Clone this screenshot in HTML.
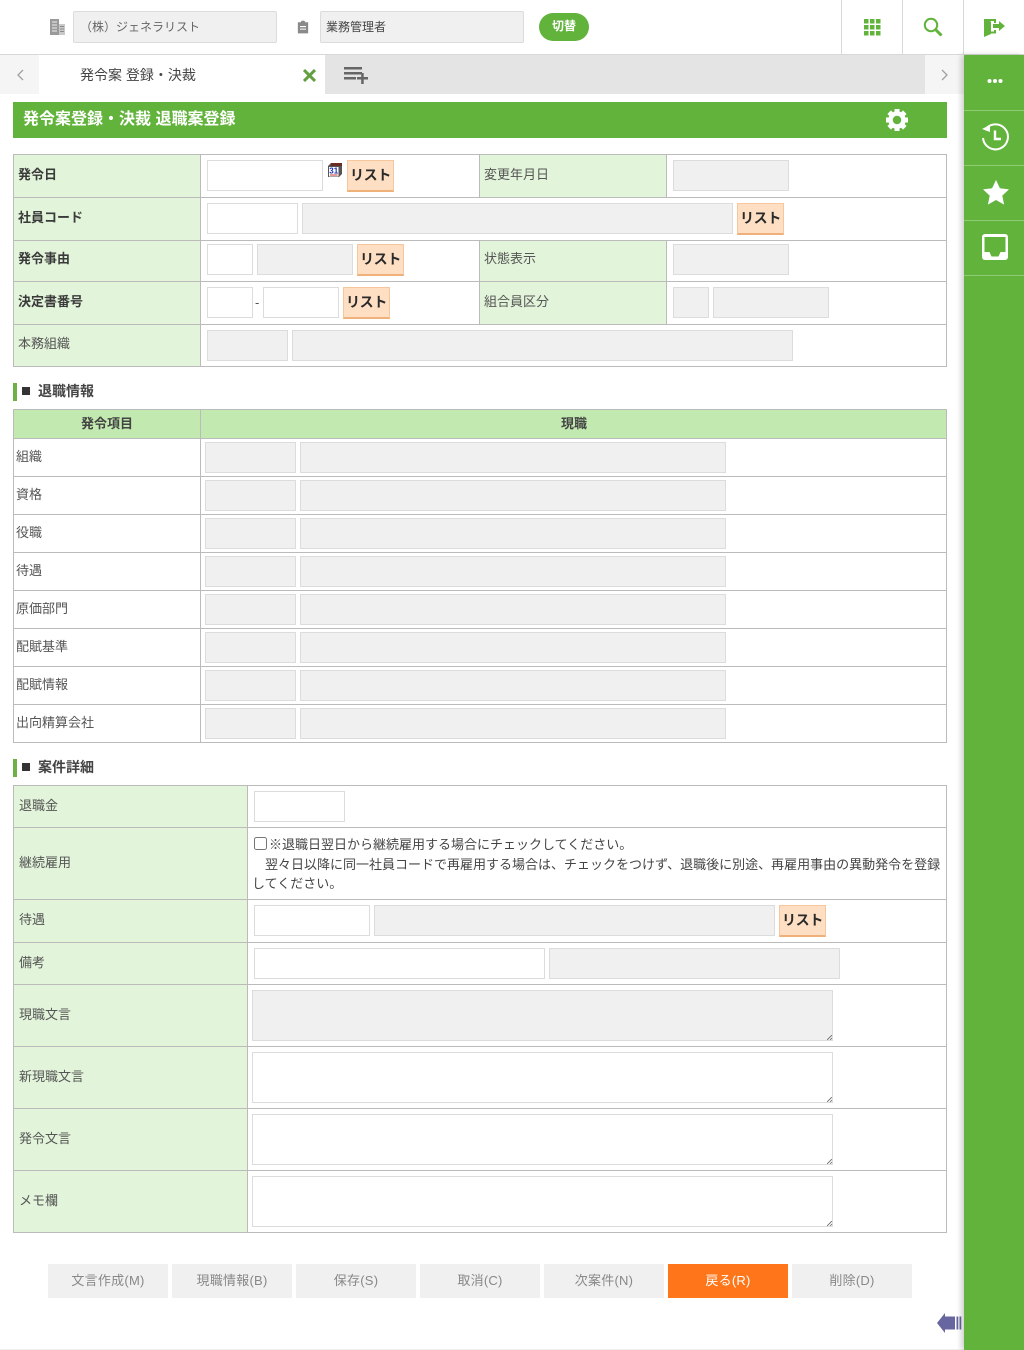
<!DOCTYPE html>
<html lang="ja">
<head>
<meta charset="utf-8">
<title>発令案 登録・決裁</title>
<style>
html,body{margin:0;padding:0;background:#fff}
body{position:relative;width:1024px;height:1350px;overflow:hidden;font-family:"Liberation Sans","Noto Sans CJK JP",sans-serif;font-size:13px;color:#555}
div,span,svg,textarea,input{position:absolute;box-sizing:border-box}
.t{line-height:20px;white-space:nowrap;height:20px;margin-top:1px}
.bd{font-weight:bold;color:#3a3a3a}
.g{background:#e2f4da}
.hl{height:1px;background:#bbb}
.vl{width:1px;background:#bbb}
.i{height:31px;background:#fff;border:1px solid #dcdcdc}
.d{height:31px;background:#f0f0f0;border:1px solid #dcdcdc}
.l{width:47px;height:32px;background:#fedfc3;border:1px solid #f6c79c;border-bottom:2px solid #f0b07a;font-size:14px;font-weight:bold;letter-spacing:-.3px;color:#2a2a2a;line-height:29px;text-align:center}
.sb{left:13px;width:4px;height:18px;background:#6db048}
.sq{left:22px;width:8px;height:8px;background:#333}
.sh{left:38px;font-size:14px;font-weight:bold;color:#444;margin-top:0}
.fb{top:1264px;width:120px;height:34px;background:#f0f0f0;color:#888;text-align:center;line-height:33px;letter-spacing:.25px}
textarea{left:252px;width:581px;height:51px;background:#fff;border:1px solid #dcdcdc;margin:0;padding:0;outline:0;resize:none}
.rh{left:827px}
.sep{left:964px;width:60px;height:1px;background:#8fcb73}
</style>
</head>
<body>
<!-- header -->
<div style="left:0;top:0;width:1024px;height:55px;background:#fff;border-bottom:1px solid #d8d8d8"></div>
<div style="left:0;top:55px;width:964px;height:5px;background:linear-gradient(#0000000d,#0000)"></div>
<svg style="left:50px;top:19px" width="16" height="16" viewBox="0 0 16 16"><rect x="0" y="0" width="9" height="16" fill="#9a9a9a"/><rect x="9" y="5" width="6" height="11" fill="#c9c9c9"/><path d="M2 3h5M2 6h5M2 9h5M2 12h5" stroke="#eee" stroke-width="1"/><path d="M10 7.500h4M10 10h4M10 12.500h4" stroke="#8a8a8a" stroke-width="1"/></svg>
<div style="left:73px;top:11px;width:204px;height:32px;background:#f0f0f0;border:1px solid #dcdcdc;border-radius:2px"></div>
<div class="t" style="left:80px;top:16px;color:#666;font-size:12px">（株）ジェネラリスト</div>
<svg style="left:297px;top:20px" width="12" height="14" viewBox="0 0 14 15"><path d="M1 2h3.500a2.500 2 0 0 1 5 0H13v13H1z" fill="#8a8a8a"/><path d="M3.500 7h7M3.500 10h7" stroke="#fff" stroke-width="1.200"/></svg>
<div style="left:320px;top:11px;width:204px;height:32px;background:#f0f0f0;border:1px solid #dcdcdc;border-radius:2px"></div>
<div class="t" style="left:326px;top:16px;color:#444;font-size:12px">業務管理者</div>
<div style="left:539px;top:13px;width:50px;height:28px;border-radius:14px;background:#62b33c;color:#fff;font-weight:bold;font-size:12px;text-align:center;line-height:27px">切替</div>
<div class="vl" style="left:841px;top:0;height:54px;background:#d8d8d8"></div>
<div class="vl" style="left:902px;top:0;height:54px;background:#d8d8d8"></div>
<div class="vl" style="left:963px;top:0;height:54px;background:#d8d8d8"></div>
<svg style="left:864px;top:19px" width="17" height="17" viewBox="0 0 17 17" fill="#62b33c"><rect x="0" y="0" width="4.500" height="4.500"/><rect x="6" y="0" width="4.500" height="4.500"/><rect x="12" y="0" width="4.500" height="4.500"/><rect x="0" y="6" width="4.500" height="4.500"/><rect x="6" y="6" width="4.500" height="4.500"/><rect x="12" y="6" width="4.500" height="4.500"/><rect x="0" y="12" width="4.500" height="4.500"/><rect x="6" y="12" width="4.500" height="4.500"/><rect x="12" y="12" width="4.500" height="4.500"/></svg>
<svg style="left:923px;top:17px" width="20" height="20" viewBox="0 0 20 20" fill="none" stroke="#62b33c"><circle cx="8" cy="8" r="6.200" stroke-width="2"/><path d="M12.500 12.500L18.500 18.500" stroke-width="3"/></svg>
<svg style="left:984px;top:19px" width="22" height="19" viewBox="0 0 22 19" fill="#62b33c"><path d="M0 0L7 2.500V15L0 18z"/><path d="M0 0H12V4H10V2H3z"/><path d="M7 12.500H10V11H12V14.500H7z"/><path d="M9 5H15V2L21 7 15 12V9H9z"/></svg>

<!-- tab bar -->
<div style="left:0;top:55px;width:964px;height:39px;background:#f5f5f5"></div>
<div style="left:39px;top:55px;width:286px;height:39px;background:#fff"></div>
<div style="left:325px;top:55px;width:600px;height:39px;background:#e4e4e4"></div>
<svg style="left:16px;top:69px" width="8" height="12" viewBox="0 0 8 12" fill="none" stroke="#a0a0a0" stroke-width="1.300"><path d="M7 1L2 6l5 5"/></svg>
<div class="t" style="left:80px;top:64px;color:#444;font-size:14px">発令案 登録・決裁</div>
<svg style="left:303px;top:69px" width="13" height="13" viewBox="0 0 13 13" stroke="#62a040" stroke-width="3"><path d="M1 1l11 11M12 1L1 12"/></svg>
<svg style="left:344px;top:67px" width="24" height="17" viewBox="0 0 24 17" fill="#666"><rect x="0" y="0" width="18" height="2.500"/><rect x="0" y="5" width="18" height="2.500"/><rect x="0" y="10" width="12" height="2.500"/><rect x="13" y="10" width="11" height="2.500"/><rect x="17.200" y="6" width="2.500" height="11"/></svg>
<svg style="left:941px;top:69px" width="8" height="12" viewBox="0 0 8 12" fill="none" stroke="#a0a0a0" stroke-width="1.300"><path d="M1 1l5 5-5 5"/></svg>

<!-- title -->
<div style="left:13px;top:102px;width:934px;height:36px;background:#62b33c"></div>
<div class="t" style="left:23px;top:109px;font-size:16px;font-weight:bold;color:#fff">発令案登録・決裁 退職案登録</div>
<svg style="left:885px;top:108px" width="24" height="24" viewBox="0 0 24 24"><circle cx="12" cy="12" r="6.500" fill="none" stroke="#fff" stroke-width="4.500"/><g stroke="#fff" stroke-width="5"><path d="M12 1v4M12 19v4M1 12h4M19 12h4M4.200 4.200l2.800 2.800M17 17l2.800 2.800M19.800 4.200L17 7M7 17l-2.800 2.800"/></g></svg>

<!-- table 1 -->
<div class="g" style="left:13px;top:154px;width:188px;height:213px"></div>
<div class="g" style="left:479px;top:154px;width:188px;height:171px"></div>
<div class="hl" style="left:13px;top:154px;width:934px"></div>
<div class="hl" style="left:13px;top:197px;width:934px"></div>
<div class="hl" style="left:13px;top:240px;width:934px"></div>
<div class="hl" style="left:13px;top:281px;width:934px"></div>
<div class="hl" style="left:13px;top:324px;width:934px"></div>
<div class="hl" style="left:13px;top:366px;width:934px"></div>
<div class="vl" style="left:13px;top:154px;height:213px"></div>
<div class="vl" style="left:200px;top:154px;height:213px"></div>
<div class="vl" style="left:479px;top:154px;height:43px"></div>
<div class="vl" style="left:479px;top:240px;height:84px"></div>
<div class="vl" style="left:666px;top:154px;height:43px"></div>
<div class="vl" style="left:666px;top:240px;height:84px"></div>
<div class="vl" style="left:946px;top:154px;height:213px"></div>
<div style="left:479px;top:198px;width:188px;height:42px;background:#fff"></div>
<div class="t bd" style="left:18px;top:164px">発令日</div>
<div class="t bd" style="left:18px;top:207px">社員コード</div>
<div class="t bd" style="left:18px;top:248px">発令事由</div>
<div class="t bd" style="left:18px;top:291px">決定書番号</div>
<div class="t" style="left:18px;top:333px">本務組織</div>
<div class="t" style="left:484px;top:164px">変更年月日</div>
<div class="t" style="left:484px;top:248px">状態表示</div>
<div class="t" style="left:484px;top:291px">組合員区分</div>

<div class="i" style="left:207px;top:160px;width:116px"></div>
<svg style="left:328px;top:163px" width="14" height="15" viewBox="0 0 14 15"><path d="M0 3L3 0h11v11l-3 3H0z" fill="#555"/><rect x="3" y="0" width="11" height="3" fill="#6b2b22"/><rect x="1" y="4" width="9.500" height="9.500" fill="#fff"/><text x="1.300" y="10.500" font-size="8" font-weight="bold" font-family="Liberation Sans" fill="#1a2fb0">31</text><rect x="2" y="11.500" width="7.500" height="1" fill="#c33"/></svg>
<div class="l" style="left:347px;top:160px">リスト</div>
<div class="d" style="left:673px;top:160px;width:116px"></div>
<div class="i" style="left:207px;top:203px;width:91px"></div>
<div class="d" style="left:302px;top:203px;width:431px"></div>
<div class="l" style="left:737px;top:203px">リスト</div>
<div class="i" style="left:207px;top:244px;width:46px"></div>
<div class="d" style="left:257px;top:244px;width:96px"></div>
<div class="l" style="left:357px;top:244px">リスト</div>
<div class="d" style="left:673px;top:244px;width:116px"></div>
<div class="i" style="left:207px;top:287px;width:46px"></div>
<div class="t" style="left:255px;top:292px">-</div>
<div class="i" style="left:263px;top:287px;width:76px"></div>
<div class="l" style="left:343px;top:287px">リスト</div>
<div class="d" style="left:673px;top:287px;width:36px"></div>
<div class="d" style="left:713px;top:287px;width:116px"></div>
<div class="d" style="left:207px;top:330px;width:81px"></div>
<div class="d" style="left:292px;top:330px;width:501px"></div>

<!-- section 2 -->
<div class="sb" style="top:383px"></div>
<div class="sq" style="top:387px"></div>
<div class="t sh" style="top:381px">退職情報</div>
<div style="left:13px;top:409px;width:934px;height:29px;background:#c2eab0"></div>
<div class="hl" style="left:13px;top:409px;width:934px"></div>
<div class="hl" style="left:13px;top:438px;width:934px"></div>
<div class="hl" style="left:13px;top:476px;width:934px"></div>
<div class="hl" style="left:13px;top:514px;width:934px"></div>
<div class="hl" style="left:13px;top:552px;width:934px"></div>
<div class="hl" style="left:13px;top:590px;width:934px"></div>
<div class="hl" style="left:13px;top:628px;width:934px"></div>
<div class="hl" style="left:13px;top:666px;width:934px"></div>
<div class="hl" style="left:13px;top:704px;width:934px"></div>
<div class="hl" style="left:13px;top:742px;width:934px"></div>
<div class="vl" style="left:13px;top:409px;height:334px"></div>
<div class="vl" style="left:200px;top:409px;height:334px"></div>
<div class="vl" style="left:946px;top:409px;height:334px"></div>
<div class="t bd" style="left:81px;top:413px;color:#444">発令項目</div>
<div class="t bd" style="left:561px;top:413px;color:#444">現職</div>
<div class="t" style="left:16px;top:446px">組織</div>
<div class="t" style="left:16px;top:484px">資格</div>
<div class="t" style="left:16px;top:522px">役職</div>
<div class="t" style="left:16px;top:560px">待遇</div>
<div class="t" style="left:16px;top:598px">原価部門</div>
<div class="t" style="left:16px;top:636px">配賦基準</div>
<div class="t" style="left:16px;top:674px">配賦情報</div>
<div class="t" style="left:16px;top:712px">出向精算会社</div>
<div class="d" style="left:205px;top:442px;width:91px"></div><div class="d" style="left:300px;top:442px;width:426px"></div>
<div class="d" style="left:205px;top:480px;width:91px"></div><div class="d" style="left:300px;top:480px;width:426px"></div>
<div class="d" style="left:205px;top:518px;width:91px"></div><div class="d" style="left:300px;top:518px;width:426px"></div>
<div class="d" style="left:205px;top:556px;width:91px"></div><div class="d" style="left:300px;top:556px;width:426px"></div>
<div class="d" style="left:205px;top:594px;width:91px"></div><div class="d" style="left:300px;top:594px;width:426px"></div>
<div class="d" style="left:205px;top:632px;width:91px"></div><div class="d" style="left:300px;top:632px;width:426px"></div>
<div class="d" style="left:205px;top:670px;width:91px"></div><div class="d" style="left:300px;top:670px;width:426px"></div>
<div class="d" style="left:205px;top:708px;width:91px"></div><div class="d" style="left:300px;top:708px;width:426px"></div>

<!-- section 3 -->
<div class="sb" style="top:759px"></div>
<div class="sq" style="top:763px"></div>
<div class="t sh" style="top:757px">案件詳細</div>
<div class="g" style="left:13px;top:785px;width:235px;height:448px"></div>
<div class="hl" style="left:13px;top:785px;width:934px"></div>
<div class="hl" style="left:13px;top:827px;width:934px"></div>
<div class="hl" style="left:13px;top:899px;width:934px"></div>
<div class="hl" style="left:13px;top:942px;width:934px"></div>
<div class="hl" style="left:13px;top:984px;width:934px"></div>
<div class="hl" style="left:13px;top:1046px;width:934px"></div>
<div class="hl" style="left:13px;top:1108px;width:934px"></div>
<div class="hl" style="left:13px;top:1170px;width:934px"></div>
<div class="hl" style="left:13px;top:1232px;width:934px"></div>
<div class="vl" style="left:13px;top:785px;height:448px"></div>
<div class="vl" style="left:247px;top:785px;height:448px"></div>
<div class="vl" style="left:946px;top:785px;height:448px"></div>
<div class="t" style="left:19px;top:795px">退職金</div>
<div class="t" style="left:19px;top:852px">継続雇用</div>
<div class="t" style="left:19px;top:909px">待遇</div>
<div class="t" style="left:19px;top:952px">備考</div>
<div class="t" style="left:19px;top:1004px">現職文言</div>
<div class="t" style="left:19px;top:1066px">新現職文言</div>
<div class="t" style="left:19px;top:1128px">発令文言</div>
<div class="t" style="left:19px;top:1190px">メモ欄</div>
<div class="i" style="left:254px;top:791px;width:91px"></div>
<input type="checkbox" style="left:254px;top:837px;width:13px;height:13px;margin:0">
<div class="t" style="left:269px;top:834px;color:#444">※退職日翌日から継続雇用する場合にチェックしてください。</div>
<div class="t" style="left:265px;top:854px;color:#444">翌々日以降に同一社員コードで再雇用する場合は、チェックをつけず、退職後に別途、再雇用事由の異動発令を登録</div>
<div class="t" style="left:252px;top:873px;color:#444">してください。</div>
<div class="i" style="left:254px;top:905px;width:116px"></div>
<div class="d" style="left:374px;top:905px;width:401px"></div>
<div class="l" style="left:779px;top:905px">リスト</div>
<div class="i" style="left:254px;top:948px;width:291px"></div>
<div class="d" style="left:549px;top:948px;width:291px"></div>
<textarea style="top:990px;background:#f0f0f0"></textarea>
<textarea style="top:1052px"></textarea>
<textarea style="top:1114px"></textarea>
<textarea style="top:1176px"></textarea>
<svg class="rh" style="top:1035px" width="5" height="5" viewBox="0 0 5 5" stroke="#666" stroke-width=".8"><path d="M0 5L5 0M3 5L5 3"/></svg>
<svg class="rh" style="top:1097px" width="5" height="5" viewBox="0 0 5 5" stroke="#666" stroke-width=".8"><path d="M0 5L5 0M3 5L5 3"/></svg>
<svg class="rh" style="top:1159px" width="5" height="5" viewBox="0 0 5 5" stroke="#666" stroke-width=".8"><path d="M0 5L5 0M3 5L5 3"/></svg>
<svg class="rh" style="top:1221px" width="5" height="5" viewBox="0 0 5 5" stroke="#666" stroke-width=".8"><path d="M0 5L5 0M3 5L5 3"/></svg>

<!-- buttons -->
<div class="fb" style="left:48px">文言作成(M)</div>
<div class="fb" style="left:172px">現職情報(B)</div>
<div class="fb" style="left:296px">保存(S)</div>
<div class="fb" style="left:420px">取消(C)</div>
<div class="fb" style="left:544px">次案件(N)</div>
<div class="fb" style="left:668px;background:#ff761a;color:#fff">戻る(R)</div>
<div class="fb" style="left:792px">削除(D)</div>
<svg style="left:937px;top:1313px" width="27" height="20" viewBox="0 0 27 20" fill="#67669f"><path d="M0 10L8 0v3.500h10v13H8V20z"/><rect x="19.500" y="3.500" width="1.800" height="13"/><rect x="22.500" y="3.500" width="1.800" height="13"/></svg>
<div class="hl" style="left:0;top:1349px;width:964px;background:#eee"></div>

<!-- sidebar -->
<div style="left:964px;top:55px;width:60px;height:1295px;background:#62b33c;box-shadow:-3px 0 5px rgba(0,0,0,.18)"></div>
<div class="sep" style="top:110px"></div>
<div class="sep" style="top:165px"></div>
<div class="sep" style="top:220px"></div>
<div class="sep" style="top:275px"></div>
<svg style="left:987px;top:78px" width="16" height="6" viewBox="0 0 16 6" fill="#fff"><circle cx="2.500" cy="3" r="2"/><circle cx="8" cy="3" r="2"/><circle cx="13.500" cy="3" r="2"/></svg>
<svg style="left:981px;top:123px" width="28" height="29" viewBox="0 0 28 29" fill="none" stroke="#fff"><path d="M4 7A12.500 12.500 0 1 1 2 15" stroke-width="2"/><path d="M1 6l8-4v7z" fill="#fff" stroke="none"/><path d="M14 7.500v8.500h6" stroke-width="2.400"/></svg>
<svg style="left:983px;top:180px" width="26" height="25" viewBox="0 0 26 25" fill="#fff"><path d="M13 0l3.900 8.300 9.100 1.100-6.700 6.200 1.800 9L13 20l-8.100 4.600 1.800-9L0 9.400l9.100-1.100z"/></svg>
<svg style="left:982px;top:234px" width="26" height="26" viewBox="0 0 26 26"><rect width="26" height="26" rx="3" fill="#fff"/><path d="M2.500 3h21v15h-5l-2 4.500h-7l-2-4.500h-5z" fill="#62b33c"/></svg>
</body>
</html>
